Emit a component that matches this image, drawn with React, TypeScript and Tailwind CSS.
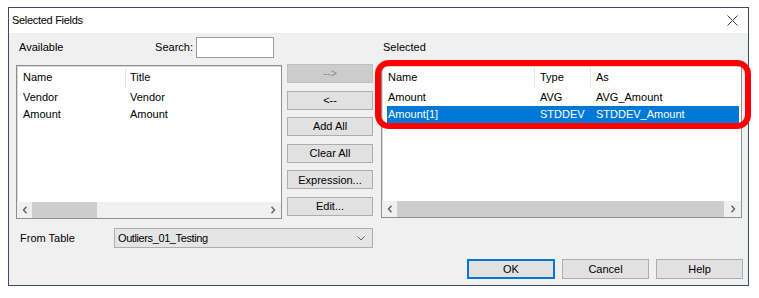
const leftRows = [
  { name: "Vendor", title: "Vendor" },
  { name: "Amount", title: "Amount" },
];

const rightRows = [
  { name: "Amount", type: "AVG", as: "AVG_Amount", selected: false },
  { name: "Amount[1]", type: "STDDEV", as: "STDDEV_Amount", selected: true },
];

const actions = [
  { label: "-->", disabled: true },
  { label: "<--", disabled: false },
  { label: "Add All", disabled: false },
  { label: "Clear All", disabled: false },
  { label: "Expression...", disabled: false },
  { label: "Edit...", disabled: false },
];

function Chevron({ dir }: { dir: "left" | "right" }) {
  return (
    <svg width="6" height="8" viewBox="0 0 6 8" className="text-[#606060]">
      <path
        d={dir === "left" ? "M4.5 0.8 L1.5 4 L4.5 7.2" : "M1.5 0.8 L4.5 4 L1.5 7.2"}
        fill="none"
        stroke="currentColor"
        strokeWidth="1.4"
      />
    </svg>
  );
}

function HScroll({ thumbWidth }: { thumbWidth: number | "full" }) {
  return (
    <div className="flex h-[16px] items-center bg-[#f0f0f0]">
      <div className="flex w-[15px] justify-center">
        <Chevron dir="left" />
      </div>
      <div className="flex h-full flex-1 items-center">
        <div
          className={`h-full bg-[#cdcdcd] ${thumbWidth === "full" ? "flex-1" : ""}`}
          style={{ width: thumbWidth === "full" ? undefined : thumbWidth }}
        />
      </div>
      <div className="flex w-[17px] justify-center">
        <Chevron dir="right" />
      </div>
    </div>
  );
}

function Btn({ label, disabled, className = "" }: { label: string; disabled?: boolean; className?: string }) {
  return (
    <div
      className={`flex h-[19px] items-center justify-center border ${
        disabled ? "border-[#bfbfbf] bg-[#cccccc] text-[#8a8a8a]" : "border-[#adadad] bg-[#e1e1e1] text-black"
      } ${className}`}
    >
      {label}
    </div>
  );
}

export default function App() {
  return (
    <div className="relative h-[298px] w-[759px] overflow-hidden bg-white pl-[8px] pt-[7px] font-['Liberation_Sans',Arial,sans-serif] text-[11px] text-black">
      <div className="flex h-[279px] w-[741px] flex-col border border-[#3b4a66]">
        {/* title bar */}
        <div className="flex h-[25px] items-center justify-between bg-white pl-[3px] pr-[10px]">
          <span className="tracking-[-0.3px]">Selected Fields</span>
          <svg width="11" height="11" viewBox="0 0 11 11">
            <path d="M0.5 0.5 L10.5 10.5 M10.5 0.5 L0.5 10.5" stroke="#404040" strokeWidth="1" />
          </svg>
        </div>

        {/* body */}
        <div className="flex flex-1 flex-col bg-[#f0f0f0] pl-[7px] pt-[4px]">
          <div className="flex h-[21px] items-center">
            <div className="flex w-[266px] items-center justify-between pl-[3px] pr-[8px]">
              <span>Available</span>
              <div className="flex items-center gap-[3px]">
                <span>Search:</span>
                <div className="h-[21px] w-[78px] border border-[#9a9a9a] bg-white" />
              </div>
            </div>
            <span className="ml-[101px]">Selected</span>
          </div>

          <div className="mt-[7px] flex items-start">
            {/* available list */}
            <div className="flex h-[154px] w-[266px] flex-col border border-[#8f8f8f] bg-white shadow-[inset_1px_1px_0_#d8d8d8]">
              <div className="flex h-[23px] items-center">
                <div className="w-[108px] pl-[6px]">Name</div>
                <div className="h-[20px] w-px bg-[#e5e5e5]" />
                <div className="pl-[4px]">Title</div>
              </div>
              {leftRows.map((r) => (
                <div key={r.name} className="flex h-[17px] items-center">
                  <div className="w-[109px] pl-[6px]">{r.name}</div>
                  <div className="pl-[4px]">{r.title}</div>
                </div>
              ))}
              <div className="flex-1" />
              <HScroll thumbWidth={65} />
            </div>

            {/* move buttons */}
            <div className="-mt-px ml-[5px] flex w-[86px] flex-col gap-[7.6px]">
              {actions.map((a) => (
                <Btn key={a.label} label={a.label} disabled={a.disabled} />
              ))}
            </div>

            {/* selected list */}
            <div className="ml-[8px] flex h-[153px] w-[361px] flex-col border border-[#8f8f8f] bg-white shadow-[inset_1px_1px_0_#d8d8d8]">
              <div className="flex h-[23px] items-center">
                <div className="w-[152px] pl-[6px]">Name</div>
                <div className="h-[20px] w-px bg-[#e5e5e5]" />
                <div className="w-[55px] pl-[5px]">Type</div>
                <div className="h-[20px] w-px bg-[#e5e5e5]" />
                <div className="pl-[5px]">As</div>
              </div>
              {rightRows.map((r) => (
                <div
                  key={r.name}
                  className={`ml-[5px] mr-[2px] flex h-[17px] items-center ${
                    r.selected ? "bg-[#0078d7] text-white" : ""
                  }`}
                >
                  <div className="w-[147px] pl-[1px]">{r.name}</div>
                  <div className="w-[56px] pl-[6px]">{r.type}</div>
                  <div className="pl-[6px]">{r.as}</div>
                </div>
              ))}
              <div className="flex-1" />
              <HScroll thumbWidth="full" />
            </div>
          </div>

          {/* from table */}
          <div className="mt-[9px] flex items-center">
            <div className="w-[98px] pl-[4px]">From Table</div>
            <div className="flex h-[20px] w-[259px] items-center justify-between border border-[#adadad] bg-[#e5e5e5] pl-[3px] pr-[7px]">
              <span className="tracking-[-0.4px]">Outliers_01_Testing</span>
              <svg width="8" height="5" viewBox="0 0 8 5">
                <path d="M0.5 0.5 L4 4 L7.5 0.5" fill="none" stroke="#606060" strokeWidth="1" />
              </svg>
            </div>
          </div>

          {/* dialog buttons */}
          <div className="mt-[11px] flex justify-end gap-[7px] pr-[5px]">
            <div className="flex h-[20px] w-[88px] items-center justify-center border-2 border-[#0078d7] bg-[#e1e1e1]">
              OK
            </div>
            <Btn label="Cancel" className="h-[20px] w-[87px]" />
            <Btn label="Help" className="h-[20px] w-[87px]" />
          </div>
        </div>
      </div>

      {/* highlight annotation */}
      <div className="absolute left-[375px] top-[60px] h-[69px] w-[376px] rounded-[14px] border-[6px] border-[#ff0000]" />
    </div>
  );
}
